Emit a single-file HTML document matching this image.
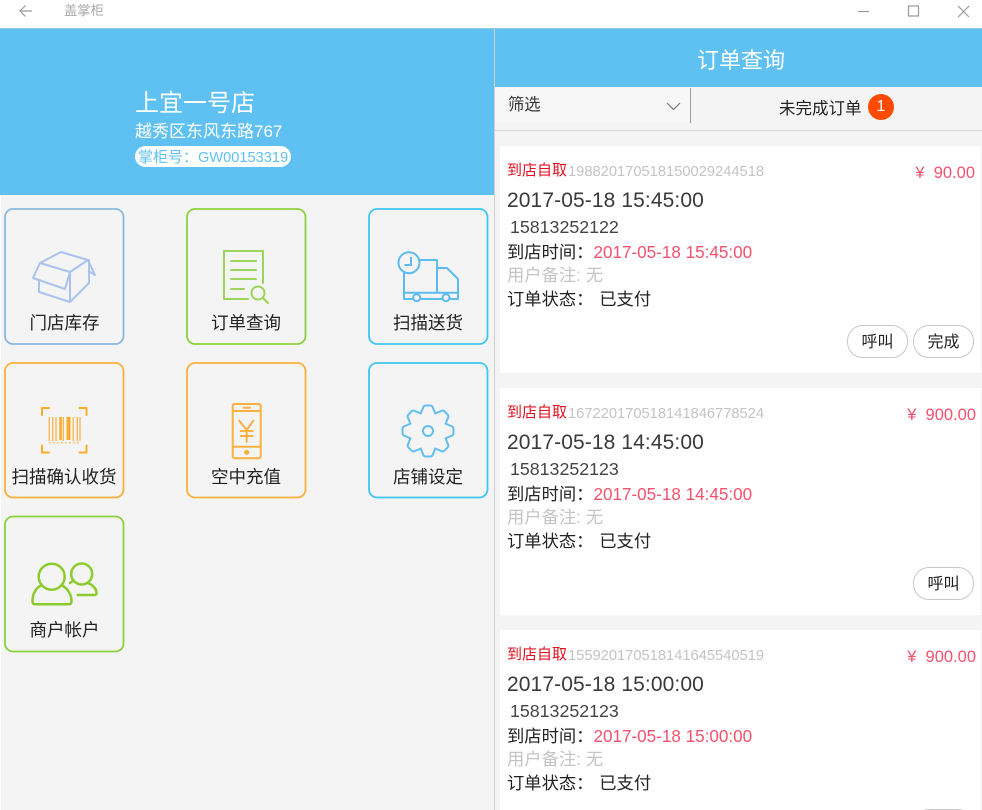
<!DOCTYPE html>
<html lang="zh">
<head>
<meta charset="utf-8">
<style>
html,body{margin:0;padding:0;background:#f4f4f4;width:982px;height:810px;overflow:hidden}
#w{position:absolute;left:0;top:0;width:982px;height:810px;overflow:hidden;font-family:"Liberation Sans","Noto Sans CJK SC",sans-serif;color:#222;background:#f4f4f4}
.a{position:absolute;white-space:nowrap;line-height:1}
.r{position:absolute}
.tl{position:absolute;white-space:nowrap;line-height:1;font-size:17.500px;color:#222;text-align:center;width:120px}
svg{position:absolute;overflow:visible}
.card{position:absolute;left:500px;width:481px;height:227px;background:#fff}
.btn{position:absolute;box-sizing:border-box;width:61px;height:33px;border:1px solid #c8c8c8;border-radius:16px;background:#fff;text-align:center;font-size:16px;line-height:33px;color:#222}
.red{color:#e01020;font-size:15px}
.no{color:#c4c4c4;font-size:14.700px}
.pr{color:#f4516c;font-size:16.500px}
.dt{color:#3a3a3a;font-size:21px;letter-spacing:.1px}
.ph{color:#444;font-size:17.800px}
.ln{font-size:17.300px;color:#222}
.pk{color:#f4516c;font-size:17.100px}
.gr{color:#c4c4c4}
.c{font-family:"Liberation Sans","Noto Sans CJK TC",sans-serif}
</style>
</head>
<body>
<div id="w">
<!-- title bar -->
<div class="r" style="left:0;top:0;width:982px;height:28px;background:#fff"></div>
<div class="r" style="left:0;top:28px;width:982px;height:1px;background:#8cc8e8"></div>
<svg style="left:18px;top:4px" width="16" height="14" viewBox="0 0 16 14" fill="none" stroke="#999" stroke-width="1.200"><path d="M14 7H2M7.500 1.500L2 7l5.500 5.500"/></svg>
<div class="a" style="left:64px;top:4px;font-size:13.300px;color:#aaa">盖掌柜</div>
<svg style="left:858px;top:5px" width="110" height="14" viewBox="0 0 110 14" fill="none" stroke="#999" stroke-width="1.200"><path d="M0 6.500H11"/><rect x="50.500" y="1" width="10" height="10"/><path d="M100 1l11 11M111 1L100 12"/></svg>

<!-- left panel -->
<div class="r" style="left:0;top:29px;width:494px;height:166px;background:#5fc1f1"></div>
<div class="r" style="left:0;top:195px;width:1px;height:615px;background:#fff"></div>
<div class="a" style="left:135px;top:92px;font-size:24px;color:#fff">上宜一号店</div>
<div class="a" style="left:135px;top:123px;font-size:17px;color:#fff">越秀区东风东路767</div>
<div class="a" style="left:135px;top:146px;width:156px;height:21px;background:#fff;border-radius:11px;color:#5fc1f1;font-size:15px;line-height:23px;text-indent:3px">掌柜号<span class="c">：</span><span style="font-size:14.600px">GW00153319</span></div>
<div class="r" style="left:494px;top:29px;width:1px;height:781px;background:#d0d0d0"></div>

<!-- tile frames -->
<svg style="left:0;top:0" width="982" height="810" fill="none" stroke-width="1.800">
<rect x="5" y="209" width="118.500" height="135" rx="8" stroke="#8ab8dc"/>
<rect x="187" y="209" width="118.500" height="135" rx="8" stroke="#8ad23c"/>
<rect x="369" y="209" width="118.500" height="135" rx="8" stroke="#3ec6f4"/>
<rect x="5" y="363" width="118.500" height="134.500" rx="8" stroke="#fbb03b"/>
<rect x="187" y="363" width="118.500" height="134.500" rx="8" stroke="#fbb03b"/>
<rect x="369" y="363" width="118.500" height="134.500" rx="8" stroke="#3ec6f4"/>
<rect x="5" y="516.500" width="118.500" height="135" rx="8" stroke="#8ad23c"/>
</svg>

<div class="tl" style="left:4.500px;top:315px">门店库存</div>
<div class="tl" style="left:186px;top:315px">订单查询</div>
<div class="tl" style="left:368px;top:315px">扫描送货</div>
<div class="tl" style="left:4px;top:469px">扫描确认收货</div>
<div class="tl" style="left:186px;top:469px">空中充值</div>
<div class="tl" style="left:368px;top:469px">店铺设定</div>
<div class="tl" style="left:4.500px;top:622px">商户帐户</div>

<!-- box -->
<svg style="left:0;top:200px" width="120" height="120" fill="none" stroke="#a9c3ec" stroke-width="2" stroke-linejoin="round" stroke-linecap="round"><path d="M40 63L61 52 88 60 70 72z"/><path d="M40 63L33 78 65 89 70 72M88 60L95 75 90 72M39 81V92L70 102 89 83V60M70 72V102"/></svg>
<!-- order doc -->
<svg style="left:186px;top:200px" width="120" height="120" fill="none" stroke="#9bd45a" stroke-width="2" stroke-linecap="round" stroke-linejoin="round"><path d="M62 99H38V51H77V83"/><path d="M45 61H70M45 70H70M45 79H70M45 89H58"/><circle cx="72" cy="93" r="6.500"/><path d="M77 98L82 103"/></svg>
<!-- truck -->
<svg style="left:368px;top:200px" width="120" height="120" fill="none" stroke="#5cbcef" stroke-width="2" stroke-linejoin="round"><path d="M50 60H69V92.700M36 70V99H90V79L79 68H69"/><path d="M36 92.700H90"/><circle cx="41" cy="62.700" r="10.500" fill="#f4f4f4"/><path d="M43 57V65H36.500"/><circle cx="48.700" cy="97.700" r="3.500" fill="#f4f4f4"/><circle cx="78" cy="97.700" r="3.500" fill="#f4f4f4"/></svg>
<!-- barcode -->
<svg style="left:0;top:355px" width="120" height="120" fill="none"><path d="M42 60V53H49M86.500 60V53H79.500M42 90.500V97.500H49M86.500 90.500V97.500H79.500" stroke="#fbab2c" stroke-width="2" stroke-linecap="round"/><path d="M49.300 62V86M52.700 62V86M56 62V86M63.300 62V86M73.300 62V86M77.300 62V86M80 62V86" stroke="#fbb859" stroke-width="1.400"/><rect x="59.300" y="62" width="2.500" height="23" fill="#fbab2c"/><rect x="66.500" y="62" width="4" height="23" fill="#fbab2c"/><path d="M49 87.700H80" stroke="#fbb859" stroke-width="1.500" stroke-dasharray="1.500 2.500"/></svg>
<!-- phone -->
<svg style="left:186px;top:355px" width="120" height="120" fill="none" stroke="#fbb040" stroke-width="2" stroke-linejoin="round" stroke-linecap="round"><rect x="46.700" y="49" width="28" height="54.300" rx="2"/><path d="M46.700 56H74.700M46.700 91.700H74.700M57.500 52.700H64"/><circle cx="60.700" cy="97.300" r="1.600" fill="#fbb040"/><path d="M53.300 65.700L60.700 75 67.300 65.700M60.700 75V86.700M54.700 76H66.700M54.700 81H66.700"/></svg>
<!-- gear -->
<svg style="left:428px;top:430.700px" width="1" height="1" fill="none" stroke="#64bff0" stroke-width="2" stroke-linejoin="round" stroke-linecap="round">
<path d="M-7.300-17.600L-5-23Q-4.500-25.500-2-25.500H2Q4.500-25.500 5-23L7.300-17.600"/>
<path transform="rotate(45)" d="M-7.300-17.600L-5-23Q-4.500-25.500-2-25.500H2Q4.500-25.500 5-23L7.300-17.600"/>
<path transform="rotate(90)" d="M-7.300-17.600L-5-23Q-4.500-25.500-2-25.500H2Q4.500-25.500 5-23L7.300-17.600"/>
<path transform="rotate(135)" d="M-7.300-17.600L-5-23Q-4.500-25.500-2-25.500H2Q4.500-25.500 5-23L7.300-17.600"/>
<path transform="rotate(180)" d="M-7.300-17.600L-5-23Q-4.500-25.500-2-25.500H2Q4.500-25.500 5-23L7.300-17.600"/>
<path transform="rotate(225)" d="M-7.300-17.600L-5-23Q-4.500-25.500-2-25.500H2Q4.500-25.500 5-23L7.300-17.600"/>
<path transform="rotate(270)" d="M-7.300-17.600L-5-23Q-4.500-25.500-2-25.500H2Q4.500-25.500 5-23L7.300-17.600"/>
<path transform="rotate(315)" d="M-7.300-17.600L-5-23Q-4.500-25.500-2-25.500H2Q4.500-25.500 5-23L7.300-17.600"/>
<circle cx="0" cy="0" r="5"/></svg>
<!-- users -->
<svg style="left:0;top:505px" width="120" height="120" fill="none" stroke="#8ccb2c" stroke-width="2.500" stroke-linecap="round" stroke-linejoin="round"><circle cx="51.700" cy="71.700" r="13"/><path d="M40 81C35 84 32.500 90 32.500 96Q32.500 99.300 35 99.300H69Q71.500 99.300 71.500 96C71.500 90 68 84 63 81"/><circle cx="81.700" cy="69" r="10.500"/><path d="M70 78L73.500 75.500M88 78C93 80 96.500 84 96.500 88Q96.500 90 94 90H77.700"/></svg>

<!-- right panel -->
<div class="r" style="left:495px;top:29px;width:487px;height:58px;background:#5fc1f1"></div>
<div class="a" style="left:697px;top:50px;font-size:22px;color:#fff">订单查询</div>
<div class="r" style="left:495px;top:88px;width:487px;height:42px;background:#f4f4f4"></div>
<div class="r" style="left:495px;top:88px;width:195px;height:35px;background:#f7f7f7"></div>
<div class="r" style="left:495px;top:130px;width:487px;height:1px;background:#d4d4d4"></div>
<div class="r" style="left:690px;top:88px;width:1px;height:35px;background:#9a9a9a"></div>
<div class="a" style="left:508px;top:97px;font-size:16.300px;color:#333">筛选</div>
<svg style="left:666px;top:102px" width="15" height="9" fill="none" stroke="#777" stroke-width="1.200"><path d="M1 1l6.500 6.500L14 1"/></svg>
<div class="a" style="left:779px;top:101px;font-size:16.500px;color:#222">未完成订单</div>
<div class="a" style="left:868px;top:94px;width:26px;height:26px;border-radius:50%;background:#fe4a03;color:#fff;text-align:center;font-size:16px;line-height:26px">1</div>

<!-- cards -->
<div class="card" style="top:146px"></div>
<div class="card" style="top:388px"></div>
<div class="card" style="top:630px;height:180px"></div>

<div class="a red" style="left:507px;top:163px">到店自取</div>
<div class="a no" style="left:568px;top:165px">198820170518150029244518</div>
<div class="a pr" style="right:7px;top:165px">¥&nbsp; 90.00</div>
<div class="a dt" style="left:507px;top:190px">2017-05-18 15:45:00</div>
<div class="a ph" style="left:510px;top:219px">15813252122</div>
<div class="a ln" style="left:507px;top:244px">到店时间<span class="c">：</span><span class="pk">2017-05-18 15:45:00</span></div>
<div class="a ln gr" style="left:507px;top:267px">用户备注: 无</div>
<div class="a ln" style="left:507px;top:291px">订单状态<span class="c">：</span> <span style="margin-left:1px">已支付</span></div>
<div class="btn" style="left:847px;top:325px">呼叫</div>
<div class="btn" style="left:913px;top:325px">完成</div>

<div class="a red" style="left:507px;top:405px">到店自取</div>
<div class="a no" style="left:568px;top:407px">167220170518141846778524</div>
<div class="a pr" style="right:6px;top:407px">¥&nbsp; 900.00</div>
<div class="a dt" style="left:507px;top:432px">2017-05-18 14:45:00</div>
<div class="a ph" style="left:510px;top:461px">15813252123</div>
<div class="a ln" style="left:507px;top:486px">到店时间<span class="c">：</span><span class="pk">2017-05-18 14:45:00</span></div>
<div class="a ln gr" style="left:507px;top:509px">用户备注: 无</div>
<div class="a ln" style="left:507px;top:533px">订单状态<span class="c">：</span> <span style="margin-left:1px">已支付</span></div>
<div class="btn" style="left:913px;top:567px">呼叫</div>

<div class="a red" style="left:507px;top:647px">到店自取</div>
<div class="a no" style="left:568px;top:649px">155920170518141645540519</div>
<div class="a pr" style="right:6px;top:649px">¥&nbsp; 900.00</div>
<div class="a dt" style="left:507px;top:674px">2017-05-18 15:00:00</div>
<div class="a ph" style="left:510px;top:703px">15813252123</div>
<div class="a ln" style="left:507px;top:728px">到店时间<span class="c">：</span><span class="pk">2017-05-18 15:00:00</span></div>
<div class="a ln gr" style="left:507px;top:751px">用户备注: 无</div>
<div class="a ln" style="left:507px;top:775px">订单状态<span class="c">：</span> <span style="margin-left:1px">已支付</span></div>
<div class="btn" style="left:913px;top:809px">呼叫</div>
</div>
</body>
</html>
